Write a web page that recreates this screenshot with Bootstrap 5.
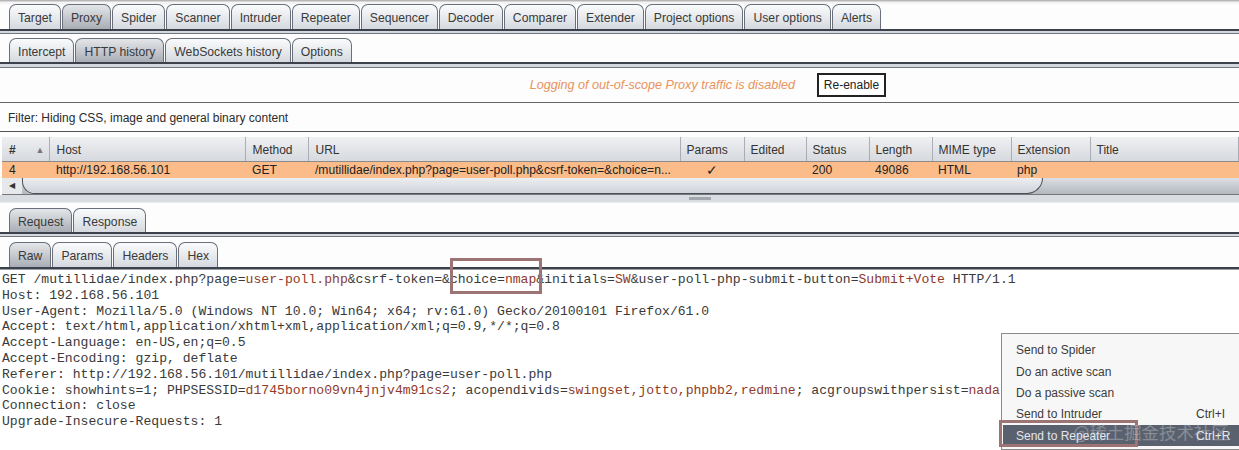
<!DOCTYPE html>
<html lang="en">
<head>
<meta charset="utf-8">
<title>Burp Suite Proxy</title>
<link rel="stylesheet" href="https://cdn.jsdelivr.net/npm/bootstrap@5.3.0/dist/css/bootstrap.min.css">
<style>
html,body{margin:0;height:450px;overflow:hidden;background:#fdfdfd;}
body{font-family:"Liberation Sans",Arial,sans-serif;font-size:12px;color:#2b2b2b;line-height:1.2;}
.page{position:relative;width:1239px;height:450px;overflow:hidden;}
.topedge{height:4px;background:linear-gradient(#b4b4b4,#b9b9b9 1px,#f4f4f4 2px);}
.tabrow{display:flex;align-items:flex-end;padding-left:9px;}
.tabitem{height:100%;display:flex;align-items:center;justify-content:center;padding:3px 8px 0;margin-right:1px;border:1px solid #6a707b;border-bottom:0;border-radius:7px 7px 0 0;background:linear-gradient(#fafbfc,#d5d9df);color:#3a3a3a;font-size:12.2px;white-space:nowrap;}
.tabitem.on{background:linear-gradient(#e4e6e9,#a9adb5);}
.r1{height:25px;}
.r2{height:24px;margin-top:4px;}
.r3{height:24px;}
.r4{height:25px;margin-top:5px;}
.rule{border-top:2px solid #3c414b;background:#d3d7de;border-bottom:1px solid #6f7680;height:6px;}
.rule.short{height:5px;}
.rule.thin{height:3px;border-bottom:0;background:#9a9ea6;}
.logbar{height:34px;padding-right:353px;display:flex;align-items:center;justify-content:flex-end;gap:22px;}
.logtext{color:#e9925c;font-style:italic;font-size:12.6px;padding-top:2px;}
.reenable{height:24px;padding:0;width:69px;border:2px solid #222;border-radius:0;background:#fff;font-size:12px;line-height:18px;color:#222;white-space:nowrap;}
.filterbox{height:30px;border-top:1px solid #666;border-bottom:1px solid #555;display:flex;align-items:center;padding:2px 0 0 8px;margin-bottom:5px;background:#fdfdfd;}
.grid{table-layout:fixed;width:1237px;margin:0 0 0 2px;border-collapse:collapse;font-size:12px;color:#333;}
.grid th{height:24px;padding:2px 0 0 7px;font-weight:400;border-right:1px solid #a9aeb6;background:linear-gradient(#eef0f2,#d6d9de);border-bottom:1px solid #8a8a8a;white-space:nowrap;}
.grid td{height:17px;padding:1px 0 0 7px;background:#fcbc8a;color:#222;border:0;white-space:nowrap;overflow:hidden;font-size:12.1px;line-height:14px;}
.grid th:nth-child(n+5),.grid td:nth-child(n+5){padding-left:6px;}
.grid td.ctr{text-align:center;padding-left:0;font-size:14px;}
.grid .hash{display:flex;justify-content:space-between;padding-right:4px;font-weight:700;}
.grid .arrow{color:#777;font-size:9px;font-weight:400;line-height:14px;}
.c1{width:47px;}.c2{width:196px;}.c3{width:63px;}.c4{width:372px;}.c5{width:64px;}.c6{width:62px;}.c7{width:63px;}.c8{width:63px;}.c9{width:79px;}.c10{width:79px;}
.hscroll{display:flex;height:17px;margin-left:2px;background:linear-gradient(#dcdfe3,#b4b8bf);border-bottom:1px solid #777;}
.hleft{width:20px;display:flex;align-items:center;justify-content:center;background:#e6e8eb;font-size:8px;color:#333;}
.hthumb{width:1021px;background:linear-gradient(#eceef0,#cfd3da);border:1px solid #4b505a;border-top:0;border-radius:0 0 18px 14px;}
.splitter{height:13px;display:flex;justify-content:center;padding-top:2px;background:linear-gradient(#d9dce1 0,#d9dce1 7px,#fdfdfd 8px);}
.grip{width:22px;height:3px;margin-left:160px;background:#a2a6ad;}
.reqtext{margin:0;padding:2px 0 0 2px;font-family:"Liberation Mono","Courier New",monospace;font-size:13.1px;line-height:15.8px;color:#3a3a3a;white-space:pre;background:#fff;height:180px;overflow:hidden;}
.val{color:#8f3a2a;}
.markbox{position:absolute;border:3px solid #9c7474;}
.mb1{left:450px;top:258px;width:92px;height:36px;}
.mb2{left:999px;top:420px;width:139px;height:27px;z-index:5;}
.ctxmenu{position:absolute;left:1001px;top:333px;width:245px;height:117px;padding-top:6px;background:#f7f7f7;border:1px solid #8b8b8b;color:#3b3b3b;}
.ctxitem{display:flex;justify-content:space-between;height:21.3px;align-items:center;padding:0 16px 0 14px;}
.ctxkey{width:33px;}
.ctxitem.sel{background:#5a616e;color:#e4e6ea;margin-left:1px;padding-left:13px;}
.stamp{position:absolute;left:1073px;top:422px;font-family:"Noto Sans CJK SC",sans-serif;font-size:17.4px;color:rgba(225,225,230,.35);white-space:nowrap;z-index:6;}
</style>
</head>
<body>
<div class="page">
  <div class="topedge"></div>
  <div class="tabrow r1">
    <div class="tabitem">Target</div><div class="tabitem on">Proxy</div><div class="tabitem">Spider</div><div class="tabitem">Scanner</div><div class="tabitem">Intruder</div><div class="tabitem">Repeater</div><div class="tabitem">Sequencer</div><div class="tabitem">Decoder</div><div class="tabitem">Comparer</div><div class="tabitem">Extender</div><div class="tabitem">Project options</div><div class="tabitem">User options</div><div class="tabitem">Alerts</div>
  </div>
  <div class="rule short"></div>
  <div class="tabrow r2">
    <div class="tabitem">Intercept</div><div class="tabitem on">HTTP history</div><div class="tabitem">WebSockets history</div><div class="tabitem">Options</div>
  </div>
  <div class="rule"></div>
  <div class="logbar">
    <span class="logtext">Logging of out-of-scope Proxy traffic is disabled</span>
    <button type="button" class="btn reenable">Re-enable</button>
  </div>
  <div class="filterbox">Filter: Hiding CSS, image and general binary content</div>
  <table class="grid">
    <colgroup><col class="c1"><col class="c2"><col class="c3"><col class="c4"><col class="c5"><col class="c6"><col class="c7"><col class="c8"><col class="c9"><col class="c10"><col></colgroup>
    <thead><tr><th><div class="hash"><span>#</span><span class="arrow">▲</span></div></th><th>Host</th><th>Method</th><th>URL</th><th>Params</th><th>Edited</th><th>Status</th><th>Length</th><th>MIME type</th><th>Extension</th><th>Title</th></tr></thead>
    <tbody><tr><td>4</td><td>http://192.168.56.101</td><td>GET</td><td>/mutillidae/index.php?page=user-poll.php&amp;csrf-token=&amp;choice=n...</td><td class="ctr">✓</td><td></td><td>200</td><td>49086</td><td>HTML</td><td>php</td><td></td></tr></tbody>
  </table>
  <div class="hscroll"><div class="hleft">◀</div><div class="hthumb"></div></div>
  <div class="splitter"><div class="grip"></div></div>
  <div class="tabrow r3">
    <div class="tabitem on">Request</div><div class="tabitem">Response</div>
  </div>
  <div class="rule short"></div>
  <div class="tabrow r4">
    <div class="tabitem on">Raw</div><div class="tabitem">Params</div><div class="tabitem">Headers</div><div class="tabitem">Hex</div>
  </div>
  <div class="rule thin"></div>
<pre class="reqtext">GET /mutillidae/index.php?page=<span class="val">user-poll.php</span>&amp;csrf-token=&amp;choice=<span class="val">nmap</span>&amp;initials=<span class="val">SW</span>&amp;user-poll-php-submit-button=<span class="val">Submit+Vote</span> HTTP/1.1
Host: 192.168.56.101
User-Agent: Mozilla/5.0 (Windows NT 10.0; Win64; x64; rv:61.0) Gecko/20100101 Firefox/61.0
Accept: text/html,application/xhtml+xml,application/xml;q=0.9,*/*;q=0.8
Accept-Language: en-US,en;q=0.5
Accept-Encoding: gzip, deflate
Referer: http://192.168.56.101/mutillidae/index.php?page=user-poll.php
Cookie: showhints=1; PHPSESSID=<span class="val">d1745borno09vn4jnjv4m91cs2</span>; acopendivids=<span class="val">swingset,jotto,phpbb2,redmine</span>; acgroupswithpersist=<span class="val">nada</span>
Connection: close
Upgrade-Insecure-Requests: 1</pre>
  <div class="markbox mb1"></div>
  <div class="ctxmenu">
    <div class="ctxitem"><span>Send to Spider</span></div>
    <div class="ctxitem"><span>Do an active scan</span></div>
    <div class="ctxitem"><span>Do a passive scan</span></div>
    <div class="ctxitem"><span>Send to Intruder</span><span class="ctxkey">Ctrl+I</span></div>
    <div class="ctxitem sel"><span>Send to Repeater</span><span class="ctxkey">Ctrl+R</span></div>
  </div>
  <div class="markbox mb2"></div>
  <div class="stamp">@稀土掘金技术社区</div>
</div>
<script src="https://cdn.jsdelivr.net/npm/bootstrap@5.3.0/dist/js/bootstrap.bundle.min.js"></script>
</body>
</html>
